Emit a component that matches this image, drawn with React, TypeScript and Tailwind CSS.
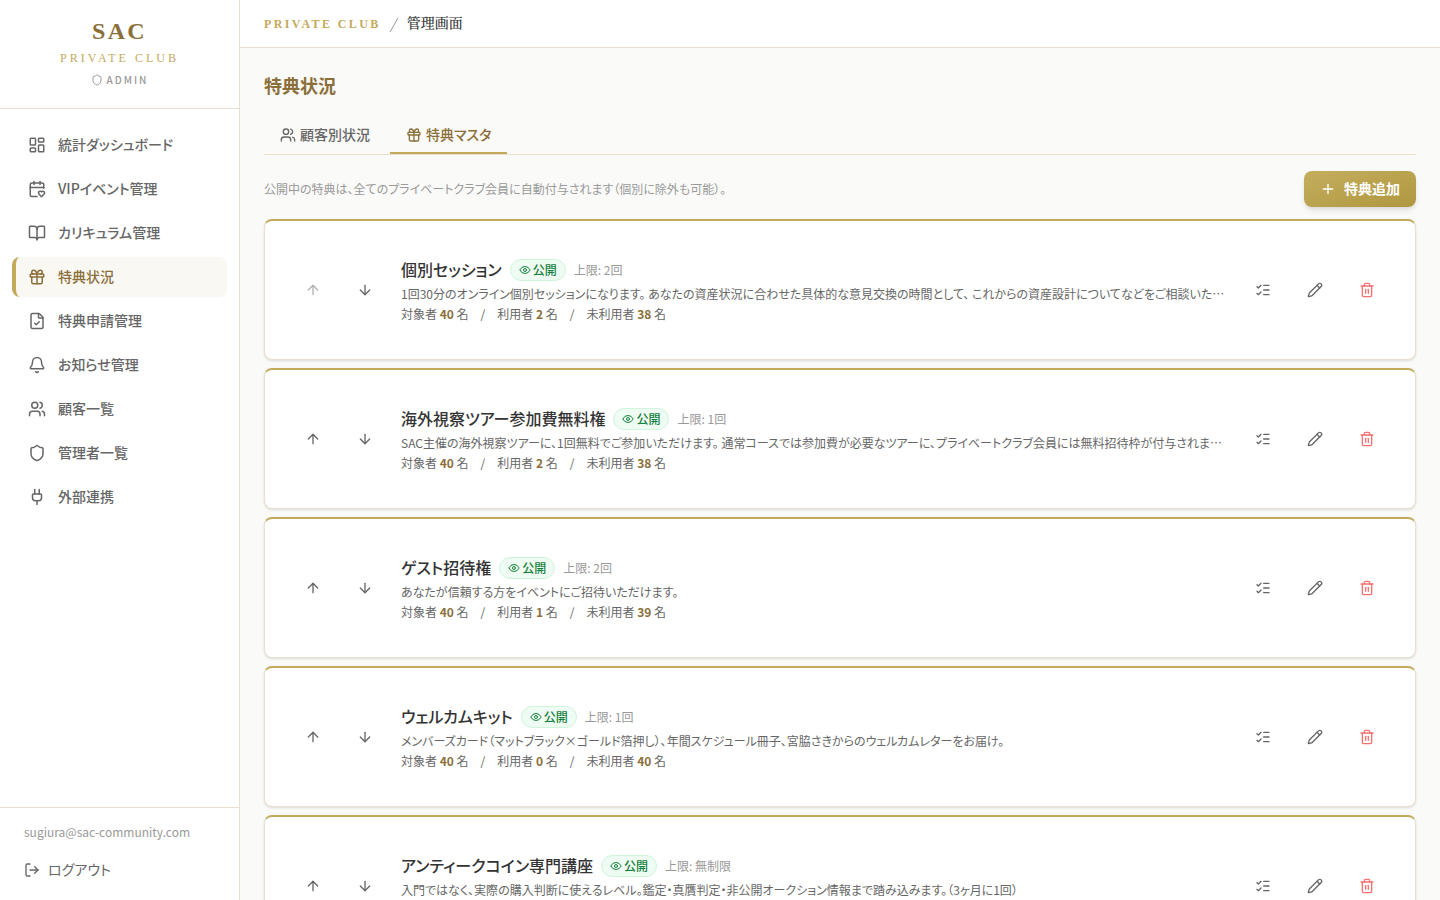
import {
  ArrowDown,
  ArrowUp,
  Bell,
  BookOpen,
  CalendarHeart,
  Eye,
  FileCheck,
  Gift,
  LayoutDashboard,
  ListChecks,
  LogOut,
  Pencil,
  Plug,
  Plus,
  Shield,
  Trash2,
  Users,
  type LucideIcon,
} from "lucide-react"

const navItems: { label: string; icon: LucideIcon; active?: boolean }[] = [
  { label: "統計ダッシュボード", icon: LayoutDashboard },
  { label: "VIPイベント管理", icon: CalendarHeart },
  { label: "カリキュラム管理", icon: BookOpen },
  { label: "特典状況", icon: Gift, active: true },
  { label: "特典申請管理", icon: FileCheck },
  { label: "お知らせ管理", icon: Bell },
  { label: "顧客一覧", icon: Users },
  { label: "管理者一覧", icon: Shield },
  { label: "外部連携", icon: Plug },
]

interface Benefit {
  title: string
  limit: string
  description: string
  target: number
  used: number
}

const benefits: Benefit[] = [
  {
    title: "個別セッション",
    limit: "2回",
    description:
      "1回30分のオンライン個別セッションになります。 あなたの資産状況に合わせた具体的な意見交換の時間として、 これからの資産設計についてなどをご相談いただけます。",
    target: 40,
    used: 2,
  },
  {
    title: "海外視察ツアー参加費無料権",
    limit: "1回",
    description:
      "SAC主催の海外視察ツアーに、1回無料でご参加いただけます。 通常コースでは参加費が必要なツアーに、プライベートクラブ会員には無料招待枠が付与されます。（年1回）",
    target: 40,
    used: 2,
  },
  {
    title: "ゲスト招待権",
    limit: "2回",
    description: "あなたが信頼する方をイベントにご招待いただけます。",
    target: 40,
    used: 1,
  },
  {
    title: "ウェルカムキット",
    limit: "1回",
    description: "メンバーズカード（マットブラック×ゴールド箔押し）、年間スケジュール冊子、宮脇さきからのウェルカムレターをお届け。",
    target: 40,
    used: 0,
  },
  {
    title: "アンティークコイン専門講座",
    limit: "無制限",
    description: "入門ではなく、実際の購入判断に使えるレベル。鑑定・真贋判定・非公開オークション情報まで踏み込みます。（3ヶ月に1回）",
    target: 40,
    used: 0,
  },
]

function Sidebar() {
  return (
    <aside className="flex w-60 shrink-0 flex-col border-r border-[#e8dfcf] bg-white">
      <div className="flex flex-col items-center border-b border-[#e8dfcf] pt-4 pb-[18px]">
        <p className="font-['Liberation_Serif',serif] text-2xl leading-[30px] font-bold tracking-widest text-[#8b6f3a]">SAC</p>
        <p className="mt-1 font-['Liberation_Serif',serif] text-xs leading-4 tracking-[0.25em] text-[#c4a95b]">PRIVATE CLUB</p>
        <p className="mt-1 flex items-center gap-1 text-[10px] leading-5 font-medium tracking-[0.2em] text-[#999]">
          <Shield size={12} />
          ADMIN
        </p>
      </div>

      <nav className="flex flex-1 flex-col gap-1 px-3 pt-4">
        {navItems.map(({ label, icon: Icon, active }) => (
          <a
            key={label}
            href="#"
            className={
              active
                ? "flex items-center gap-3 rounded-lg border-l-4 border-[#c4a95b] bg-[#faf8f3] px-3 pt-[9px] pb-2.5 text-sm leading-[21px] font-medium text-[#8b6f3a]"
                : "flex items-center gap-3 rounded-lg border-l-4 border-transparent px-3 pt-[9px] pb-2.5 text-sm leading-[21px] font-medium text-[#666]"
            }
          >
            <Icon size={18} />
            {label}
          </a>
        ))}
      </nav>

      <div className="border-t border-[#e8dfcf] px-6 pt-4 pb-3">
        <p className="text-xs leading-4 text-[#999]">sugiura@sac-community.com</p>
        <button type="button" className="mt-3 flex items-center gap-2 pt-[7px] pb-2 text-sm leading-[21px] text-[#666]">
          <LogOut size={16} />
          ログアウト
        </button>
      </div>
    </aside>
  )
}

function IconButton({ label, icon: Icon, className, disabled }: { label: string; icon: LucideIcon; className: string; disabled?: boolean }) {
  return (
    <button type="button" aria-label={label} disabled={disabled} className={`flex size-12 items-center justify-center rounded-lg disabled:opacity-50 ${className}`}>
      <Icon size={16} />
    </button>
  )
}

function BenefitCard({ benefit, first }: { benefit: Benefit; first: boolean }) {
  const { title, limit, description, target, used } = benefit

  return (
    <li className="flex items-center gap-3 rounded-lg border border-t-2 border-[#e8dfcf] border-t-[#c4a95b] bg-white px-6 py-[35px] shadow-sm">
      <div className="flex shrink-0 gap-1">
        <IconButton label="上へ移動" icon={ArrowUp} className="text-[#666]" disabled={first} />
        <IconButton label="下へ移動" icon={ArrowDown} className="text-[#666]" />
      </div>

      <div className="min-w-0 flex-1 text-xs leading-5 text-[#666]">
        <div className="flex h-7 items-center gap-2">
          <h2 className="pb-0.5 text-base leading-6 font-medium text-[#333]">{title}</h2>
          <span className="flex h-[22px] items-center gap-[2px] rounded-full border border-[#d0f5dd] bg-[#effcf3] px-2 font-medium text-[#15803d]">
            <Eye size={12} />
            公開
          </span>
          <span className="text-[#999]">上限: {limit}</span>
        </div>
        <p className="truncate">{description}</p>
        <p className="flex gap-3">
          <span>対象者 <b className="text-[#8b6f3a]">{target}</b> 名</span>
          <span>/</span>
          <span>利用者 <b className="text-[#8b6f3a]">{used}</b> 名</span>
          <span>/</span>
          <span>未利用者 <b className="text-[#8b6f3a]">{target - used}</b> 名</span>
        </p>
      </div>

      <div className="flex shrink-0 gap-1">
        <IconButton label="利用状況" icon={ListChecks} className="text-[#666]" />
        <IconButton label="編集" icon={Pencil} className="text-[#666]" />
        <IconButton label="削除" icon={Trash2} className="text-[#f87171]" />
      </div>
    </li>
  )
}

export default function App() {
  return (
    <div lang="ja" className="flex h-screen bg-[#fafaf8] font-['Noto_Sans_CJK_JP',sans-serif] text-[#333] [font-feature-settings:'palt']">
      <Sidebar />

      <div className="flex min-w-0 flex-1 flex-col">
        <header className="flex h-12 shrink-0 items-center gap-2 border-b border-[#e8dfcf] bg-white px-6 font-['Liberation_Serif','Noto_Serif_CJK_JP','Noto_Serif_JP',serif]">
          <span className="text-xs font-bold tracking-[0.2em] text-[#c4a95b]">PRIVATE CLUB</span>
          <svg width="10" height="16" viewBox="0 0 10 16" fill="none" stroke="#999" aria-hidden="true">
            <path d="M1 16 9 2" />
          </svg>
          <span className="text-sm font-medium">管理画面</span>
        </header>

        <main className="flex-1 overflow-y-auto p-6">
          <h1 className="mb-[17px] text-lg leading-[26px] font-bold text-[#8b6f3a]">特典状況</h1>

          <div role="tablist" className="flex gap-1 border-b border-[#e8dfcf] text-sm leading-[21px] font-medium">
            <button type="button" role="tab" aria-selected="false" className="flex items-center gap-1 border-b-2 border-transparent px-4 pt-[9px] pb-[7px] text-[#666]">
              <Users size={16} />
              顧客別状況
            </button>
            <button type="button" role="tab" aria-selected="true" className="flex items-center gap-1 border-b-2 border-[#c4a95b] px-4 pt-[9px] pb-[7px] text-[#8b6f3a]">
              <Gift size={16} />
              特典マスタ
            </button>
          </div>

          <div className="mt-4 flex items-center justify-between gap-4">
            <p className="text-xs text-[#999]">公開中の特典は、全てのプライベートクラブ会員に自動付与されます（個別に除外も可能）。</p>
            <button
              type="button"
              className="flex shrink-0 items-center gap-2 rounded-lg bg-linear-to-br from-[#c4ad5e] to-[#b0983f] px-4 pt-[7px] pb-2 text-sm leading-[21px] font-bold text-white shadow-md"
            >
              <Plus size={16} />
              特典追加
            </button>
          </div>

          <ul className="mt-3 flex flex-col gap-2">
            {benefits.map((benefit, i) => (
              <BenefitCard key={benefit.title} benefit={benefit} first={i === 0} />
            ))}
          </ul>
        </main>
      </div>
    </div>
  )
}
